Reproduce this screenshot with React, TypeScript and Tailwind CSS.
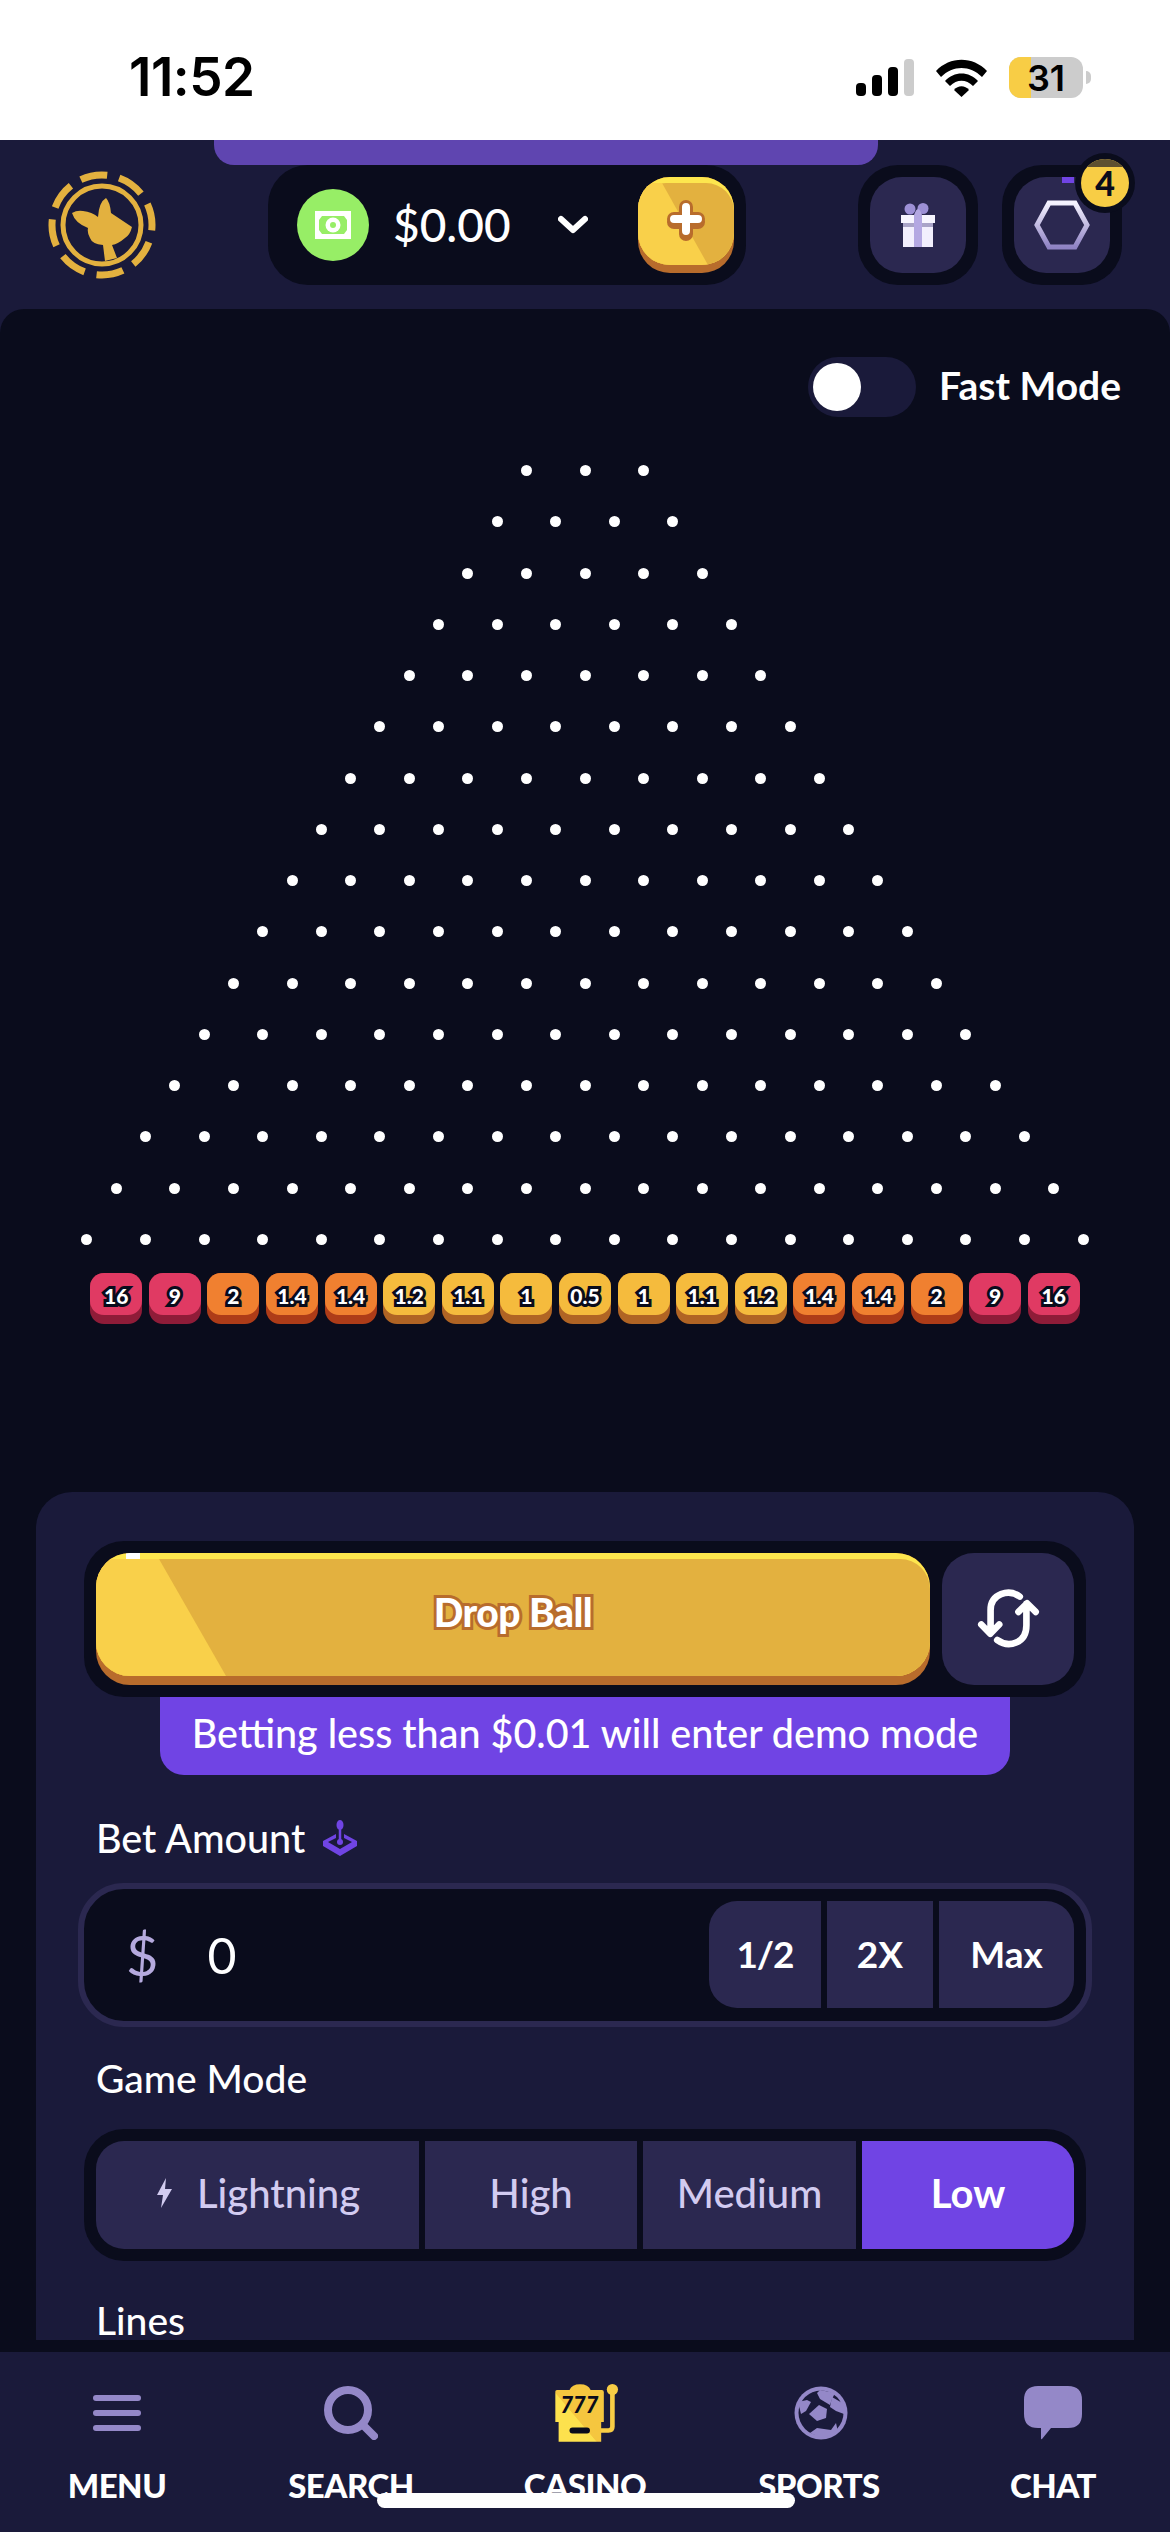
const CHIPS: [string, 'red' | 'orange' | 'yellow'][] = [
  ['16', 'red'], ['9', 'red'], ['2', 'orange'], ['1.4', 'orange'], ['1.4', 'orange'], ['1.2', 'yellow'],
  ['1.1', 'yellow'], ['1', 'yellow'], ['0.5', 'yellow'], ['1', 'yellow'], ['1.1', 'yellow'], ['1.2', 'yellow'],
  ['1.4', 'orange'], ['1.4', 'orange'], ['2', 'orange'], ['9', 'red'], ['16', 'red'],
]

const CHIP_STYLES = {
  red: { base: 'bg-[#8f1c38]', face: 'bg-[#e03a63]' },
  orange: { base: 'bg-[#ae3c18]', face: 'bg-[#f08030]' },
  yellow: { base: 'bg-[#b06424]', face: 'bg-[#f5bb3d]' },
}

function StatusBar() {
  return (
    <div className="flex h-[140px] shrink-0 items-center justify-between bg-white pl-[129px] pr-[79px] pt-[15px]">
      <span className="font-['Inter',sans-serif] text-[53px] font-semibold leading-none tracking-[-0.5px] text-black">11:52</span>
      <div className="flex items-center">
        <svg width="58" height="37" viewBox="0 0 58 37">
          <rect x="0" y="24" width="10" height="13" rx="4" fill="#000" />
          <rect x="16" y="16" width="10" height="21" rx="4" fill="#000" />
          <rect x="32" y="8" width="10" height="29" rx="4" fill="#000" />
          <rect x="48" y="0" width="10" height="37" rx="4" fill="#cccccc" />
        </svg>
        <svg className="ml-[22px]" width="51" height="38" viewBox="0 0 51 38">
          <path d="M0 12 C14 -3 37 -3 51 12 L46 18 C34 6 17 6 5 18 Z" fill="#000" />
          <path d="M9 22 C18 12 33 12 42 22 L37 27 C30 20 21 20 14 27 Z" fill="#000" />
          <path d="M18 31 C22 26 29 26 33 31 L25.5 38 Z" fill="#000" />
        </svg>
        <div className="relative ml-[22px] flex h-[41px] w-[74px] items-center justify-center overflow-hidden rounded-[12px] bg-[#cccccc]">
          <div className="absolute inset-y-0 left-0 w-[22px] bg-[#f8cd45]" />
          <span className="relative font-['Inter',sans-serif] text-[36px] font-semibold leading-none text-black">31</span>
        </div>
        <div className="ml-[3px] h-[13px] w-[5px] rounded-r-full bg-[#cccccc]" />
      </div>
    </div>
  )
}

function Logo() {
  return (
    <svg width="108" height="108" viewBox="18 21 108 108">
      <circle cx="72" cy="75" r="50" fill="none" stroke="#e3b13f" strokeWidth="7" strokeDasharray="27 12.27" transform="rotate(-115 72 75)" />
      <circle cx="72" cy="75" r="39" fill="none" stroke="#e3b13f" strokeWidth="5" />
      <path d="M76 48 Q80 52 81 63 L102 77 Q100 85 95 88 Q88 94 82 95 L87 108 L75 111 L73 95 Q62 94 60 88 Q57 83 58 78 Q45 73 42 63 Q47 60 53 61 Q62 62 68 67 Q69 52 76 48 Z" fill="#e3b13f" />
    </svg>
  )
}

function MoneyIcon() {
  return (
    <svg width="36" height="28" viewBox="0 0 36 28">
      <rect width="36" height="28" fill="#fff" />
      <path d="M7 5 L29 5 L32 9 L32 19 L29 23 L7 23 L4 19 L4 9 Z" fill="#97ee66" />
      <circle cx="18" cy="14" r="7.5" fill="#fff" />
      <circle cx="18" cy="14" r="3" fill="#97ee66" />
    </svg>
  )
}

function PlusButton() {
  return (
    <div className="h-[96px] w-[96px] shrink-0 rounded-[32px] bg-[#b86c2c]">
      <div className="relative flex h-[88px] items-center justify-center overflow-hidden rounded-[32px] bg-[#fde64e]">
        <div className="absolute inset-x-0 bottom-0 top-[6px] rounded-t-[28px] bg-[#e3b13f]" />
        <div className="absolute inset-x-0 bottom-0 top-[6px] bg-[#f9d04a] [clip-path:polygon(0_0,24px_0,70px_100%,0_100%)]" />
        <svg className="relative" width="38" height="42" viewBox="0 0 38 42">
          <path d="M19 7 V31 M7 19 H31" transform="translate(0 3)" stroke="#b86c2c" strokeWidth="14" strokeLinecap="round" fill="none" />
          <path d="M19 7 V31 M7 19 H31" stroke="#b86c2c" strokeWidth="14" strokeLinecap="round" fill="none" />
          <path d="M19 7 V31 M7 19 H31" stroke="#fff" strokeWidth="8" strokeLinecap="round" fill="none" />
        </svg>
      </div>
    </div>
  )
}

function GiftIcon() {
  return (
    <svg width="34" height="44" viewBox="0 0 34 44">
      <ellipse cx="9" cy="6" rx="5.5" ry="5.5" fill="#9d90d6" />
      <ellipse cx="22" cy="5.5" rx="5.5" ry="5.5" fill="#9d90d6" />
      <path d="M13 12 Q17 0 21 12 Z" fill="#b4a8e2" />
      <rect x="2" y="16" width="30" height="28" fill="#f2effd" />
      <rect x="0" y="12" width="34" height="8" fill="#f7f5ff" />
      <rect x="2" y="20" width="30" height="4" fill="#aaa4c8" />
      <rect x="13" y="12" width="8" height="32" fill="#b4a8e2" />
    </svg>
  )
}

function HexIcon() {
  return (
    <svg width="56" height="50" viewBox="0 0 56 50">
      <defs>
        <linearGradient id="hex" x1="0" y1="0" x2="0" y2="1">
          <stop offset="0" stopColor="#f5f3ff" />
          <stop offset="1" stopColor="#8f83c4" />
        </linearGradient>
      </defs>
      <path d="M15 3 H41 L53 25 L41 47 H15 L3 25 Z" fill="none" stroke="url(#hex)" strokeWidth="5" />
    </svg>
  )
}

function Header() {
  return (
    <div className="relative h-[169px] shrink-0 bg-[#1a1a3a]">
      <div className="ml-[214px] h-[25px] w-[664px] rounded-b-[20px] bg-[#5f45b0]" />
      <div className="flex items-center pl-[48px] pr-[48px]">
        <div className="-mt-[1px]">
          <Logo />
        </div>
        <div className="ml-[112px] flex h-[120px] w-[478px] items-center rounded-[40px] bg-[#0a0c1c] pl-[29px] pr-[12px]">
          <div className="flex h-[72px] w-[72px] shrink-0 items-center justify-center rounded-full bg-[#97ee66]">
            <MoneyIcon />
          </div>
          <span className="ml-[24px] text-[46px] font-medium leading-none text-white">$0.00</span>
          <svg className="ml-[47px]" width="30" height="20" viewBox="0 0 30 20">
            <path d="M3 4 L15 15 L27 4" fill="none" stroke="#fff" strokeWidth="6" strokeLinecap="round" strokeLinejoin="round" />
          </svg>
          <div className="ml-auto">
            <PlusButton />
          </div>
        </div>
        <div className="ml-[112px] flex h-[120px] w-[120px] shrink-0 items-center justify-center rounded-[40px] bg-[#0a0c1c]">
          <div className="flex h-[96px] w-[96px] items-center justify-center rounded-[32px] bg-[#2b2850]">
            <GiftIcon />
          </div>
        </div>
        <div className="ml-[24px] flex h-[120px] w-[120px] shrink-0 items-center justify-center rounded-[40px] bg-[#0a0c1c]">
          <div className="relative flex h-[96px] w-[96px] items-center justify-center rounded-[32px] bg-[#2b2850]">
            <HexIcon />
            <div className="absolute left-[48px] top-0 h-[6px] w-[12px] bg-[#7044e4]" />
            <div className="absolute -right-[25px] -top-[24px] rounded-full bg-[#0a0c1c] p-[6px]">
              <div className="relative flex h-[48px] w-[48px] items-center justify-center overflow-hidden rounded-full bg-[#f8cd45]">
                <div className="absolute inset-x-0 top-0 h-[8px] bg-[#5e5030]" />
                <span className="relative text-[34px] font-black leading-none text-[#0a0c1c]">4</span>
              </div>
            </div>
          </div>
        </div>
      </div>
    </div>
  )
}

function Pegs() {
  const rows = Array.from({ length: 16 }, (_, i) => i + 3)
  return (
    <div className="mt-[48px] flex flex-col gap-[40.27px]">
      {rows.map((count) => (
        <div key={count} className="flex h-[11px] justify-center gap-[47.6px]">
          {Array.from({ length: count }, (_, i) => (
            <div key={i} className="h-[11px] w-[11px] rounded-full bg-white" />
          ))}
        </div>
      ))}
    </div>
  )
}

function Chips() {
  return (
    <div className="mt-[28px] flex justify-center gap-[6.6px]">
      {CHIPS.map(([label, tone], i) => (
        <div key={i} className={`h-[51px] w-[52px] rounded-[14px] ${CHIP_STYLES[tone].base}`}>
          <div className={`flex h-[42px] items-center justify-center rounded-[14px] pt-[4px] ${CHIP_STYLES[tone].face}`}>
            <span className="text-[21px] font-black leading-none text-white [-webkit-text-stroke:6px_#0a0c1c] [paint-order:stroke_fill]">{label}</span>
          </div>
        </div>
      ))}
    </div>
  )
}

function RefreshIcon() {
  return (
    <svg width="68" height="67" viewBox="100 50 205 200">
      <path d="M238 84 C205 60 150 75 150 125 V192 M122 168 L149 196 L176 168" fill="none" stroke="#fff" strokeWidth="20" strokeLinecap="round" strokeLinejoin="round" />
      <path d="M170 215 C205 240 258 225 258 170 V106 M234 130 L260 104 L286 130" fill="none" stroke="#fff" strokeWidth="20" strokeLinecap="round" strokeLinejoin="round" />
    </svg>
  )
}

function DropRow() {
  return (
    <div className="mx-[48px] flex h-[156px] gap-[12px] rounded-[40px] bg-[#0a0c1c] p-[12px]">
      <div className="h-[132px] flex-1 rounded-[34px] bg-[#b86c2c]">
        <div className="relative flex h-[123px] items-center justify-center overflow-hidden rounded-[34px] bg-[#fde64e] pb-[3px]">
          <div className="absolute inset-x-0 bottom-0 top-[6px] rounded-t-[30px] bg-[#e3b13f]" />
          <div className="absolute inset-x-0 bottom-0 top-[6px] bg-[#f9d04a] [clip-path:polygon(0_0,63px_0,130px_100%,0_100%)]" />
          <div className="absolute left-[30px] top-0 h-[6px] w-[14px] bg-white" />
          <span className="relative text-[39px] font-black leading-none tracking-[-0.5px] text-white [-webkit-text-stroke:6px_#b86c2c] [paint-order:stroke_fill]">Drop Ball</span>
        </div>
      </div>
      <div className="flex h-[132px] w-[132px] shrink-0 items-center justify-center rounded-[32px] bg-[#2b2850]">
        <RefreshIcon />
      </div>
    </div>
  )
}

function JoystickIcon() {
  return (
    <svg width="36" height="36" viewBox="0 0 36 36">
      <path d="M18 4 V22" stroke="#7044e4" strokeWidth="2.5" />
      <ellipse cx="18" cy="5" rx="3.5" ry="5" fill="#7044e4" />
      <path d="M1 21 L14 14 V18 L6 22 L18 29 L30 22 L22 18 V14 L35 21 V26 L18 36 L1 26 Z" fill="#7044e4" />
      <circle cx="18" cy="22" r="3" fill="#7044e4" />
    </svg>
  )
}

function BetInput() {
  return (
    <div className="mx-[42px] mt-[25px] flex h-[144px] items-center rounded-[46px] border-[6px] border-[#2b2850] bg-[#0a0c1c] pl-[42px] pr-[12px]">
      <span className="text-[56px] font-normal leading-none text-[#b5aade]">$</span>
      <span className="ml-[49px] text-[50px] font-normal leading-none text-white">0</span>
      <div className="ml-auto flex h-[107px] gap-[6px]">
        <div className="flex w-[112px] items-center justify-center rounded-l-[28px] bg-[#2b2850] pb-[3px] text-[37px] font-bold tracking-[-1px] text-white">1/2</div>
        <div className="flex w-[106px] items-center justify-center bg-[#2b2850] pb-[3px] text-[37px] font-bold text-white">2X</div>
        <div className="flex w-[135px] items-center justify-center rounded-r-[28px] bg-[#2b2850] pb-[3px] text-[37px] font-bold text-white">Max</div>
      </div>
    </div>
  )
}

function ModeTabs() {
  return (
    <div className="mx-[48px] mt-[30px] flex h-[132px] gap-[6px] rounded-[40px] bg-[#0a0c1c] p-[12px]">
      <div className="flex w-[323px] items-center justify-center gap-[24px] rounded-l-[28px] bg-[#2b2850] pb-[3px] text-[40px] font-medium text-[#d2cbf0]">
        <svg width="18" height="30" viewBox="0 0 18 30">
          <path d="M11 0 L2 17 H8 L6 30 L17 11 H10 Z" fill="#d2cbf0" />
        </svg>
        Lightning
      </div>
      <div className="flex w-[212px] items-center justify-center bg-[#2b2850] pb-[3px] text-[40px] font-medium text-[#d2cbf0]">High</div>
      <div className="flex w-[213px] items-center justify-center bg-[#2b2850] pb-[3px] text-[40px] font-medium text-[#d2cbf0]">Medium</div>
      <div className="flex w-[212px] items-center justify-center rounded-r-[28px] bg-[#7044e4] pb-[3px] text-[40px] font-bold text-white">Low</div>
    </div>
  )
}

function BetPanel() {
  return (
    <div className="mx-[36px] mb-[12px] mt-[168px] min-h-0 flex-1 rounded-t-[36px] bg-[#1a1a3a] pt-[49px]">
      <DropRow />
      <div className="mx-[124px] flex h-[78px] items-center justify-center rounded-b-[24px] bg-[#7044e4] pb-[7px] text-[39.5px] font-medium leading-none text-white">
        Betting less than $0.01 will enter demo mode
      </div>
      <div className="ml-[60px] mt-[43px] flex h-[40px] items-center gap-[17px] text-[39.5px] font-medium leading-none text-white">
        Bet Amount
        <JoystickIcon />
      </div>
      <BetInput />
      <div className="ml-[60px] mt-[32px] flex h-[40px] items-center text-[39px] font-medium leading-none text-white">Game Mode</div>
      <ModeTabs />
      <div className="ml-[60px] mt-[41px] h-[36px] text-[39px] font-medium leading-[36px] text-white">Lines</div>
    </div>
  )
}

function Board() {
  return (
    <div className="flex min-h-0 flex-1 flex-col rounded-t-[24px] bg-[#0a0c1c] pt-[48px]">
      <div className="flex h-[60px] shrink-0 items-center justify-end pr-[49px]">
        <div className="flex h-[60px] w-[108px] items-center rounded-full bg-[#1a1a3a] pl-[5px]">
          <div className="h-[48px] w-[48px] rounded-full bg-white" />
        </div>
        <span className="ml-[23px] -translate-y-[2px] text-[39px] font-bold leading-none text-white">Fast Mode</span>
      </div>
      <Pegs />
      <Chips />
      <BetPanel />
    </div>
  )
}

function CasinoIcon() {
  return (
    <svg className="ml-[4px]" width="64" height="60" viewBox="764 33 194 180">
      <defs>
        <linearGradient id="slot" x1="0" y1="1" x2="1" y2="0">
          <stop offset="0.42" stopColor="#fde14d" />
          <stop offset="0.43" stopColor="#f5c63f" />
        </linearGradient>
      </defs>
      <path d="M938 60 V165 Q938 176 926 176 H900" fill="none" stroke="#f8cd45" strokeWidth="14" />
      <circle cx="938" cy="52" r="17" fill="#f8cd45" />
      <path d="M770 53 H808 Q815 36 840 36 Q865 36 872 53 H906 Q912 53 912 59 V150 H904 V210 H775 V150 H765 V58 Q765 53 770 53 Z" fill="url(#slot)" />
      <text x="838" y="124" textAnchor="middle" fontSize="66" fontWeight="900" fontStyle="italic" fill="#0a0c1c" fontFamily="Lato, sans-serif">777</text>
      <rect x="808" y="167" width="62" height="18" rx="9" fill="#0a0c1c" />
    </svg>
  )
}

function BallIcon() {
  return (
    <svg className="ml-[4px]" width="54" height="54" viewBox="0 0 54 54">
      <circle cx="27" cy="27" r="26.5" fill="#9488c8" />
      <circle cx="27" cy="27" r="22.5" fill="#1a1a3a" />
      <path d="M25 19 L33 23 L32 32 L23 35 L15 28 Z" fill="#9488c8" />
      <path d="M26 4 L41 7 L38 13 L36 19 L26 13 L23 7 Z" fill="#9488c8" />
      <path d="M38 11 L50 18 L50 28 L42 25 L36 21 Z" fill="#9488c8" />
      <path d="M4 16 L13 14 L17 16 L12 25 L7 28 Z" fill="#9488c8" />
      <path d="M23 42 L37 44 L42 37 L44 46 L28 52 L16 47 Z" fill="#9488c8" />
    </svg>
  )
}

function NavItem({ label, children }: { label: string; children: React.ReactNode }) {
  return (
    <div className="flex flex-col items-center">
      <div className="flex h-[60px] items-center justify-center">{children}</div>
      <span className="mt-[22px] text-[33px] font-black leading-[40px] tracking-[-0.5px] text-white">{label}</span>
    </div>
  )
}

function BottomNav() {
  return (
    <div className="relative h-[180px] shrink-0 bg-[#1a1a3a] pt-[31px]">
      <div className="grid grid-cols-5">
        <NavItem label="MENU">
          <svg width="48" height="36" viewBox="0 0 48 36">
            <rect width="48" height="6" rx="3" fill="#9488c8" />
            <rect y="15" width="48" height="6" rx="3" fill="#9488c8" />
            <rect y="30" width="48" height="6" rx="3" fill="#9488c8" />
          </svg>
        </NavItem>
        <NavItem label="SEARCH">
          <svg width="54" height="54" viewBox="0 0 54 54">
            <circle cx="24" cy="24" r="20" fill="none" stroke="#9488c8" strokeWidth="8" />
            <path d="M39 39 L50 50" stroke="#9488c8" strokeWidth="8" strokeLinecap="round" />
          </svg>
        </NavItem>
        <NavItem label="CASINO">
          <CasinoIcon />
        </NavItem>
        <NavItem label="SPORTS">
          <BallIcon />
        </NavItem>
        <NavItem label="CHAT">
          <svg width="58" height="54" viewBox="0 0 58 54">
            <path d="M14 0 H44 Q58 0 58 14 V28 Q58 42 44 42 H27 L18 53 Q17 54 17 52 V42 H14 Q0 42 0 28 V14 Q0 0 14 0 Z" fill="#9488c8" />
          </svg>
        </NavItem>
      </div>
      <div className="absolute bottom-[24px] left-[377px] h-[15px] w-[418px] rounded-full bg-white" />
    </div>
  )
}

export default function App() {
  return (
    <div className="flex h-[2532px] w-[1170px] flex-col overflow-hidden bg-[#1a1a3a] font-['Lato','Noto_Sans',sans-serif]">
      <StatusBar />
      <Header />
      <Board />
      <BottomNav />
    </div>
  )
}
